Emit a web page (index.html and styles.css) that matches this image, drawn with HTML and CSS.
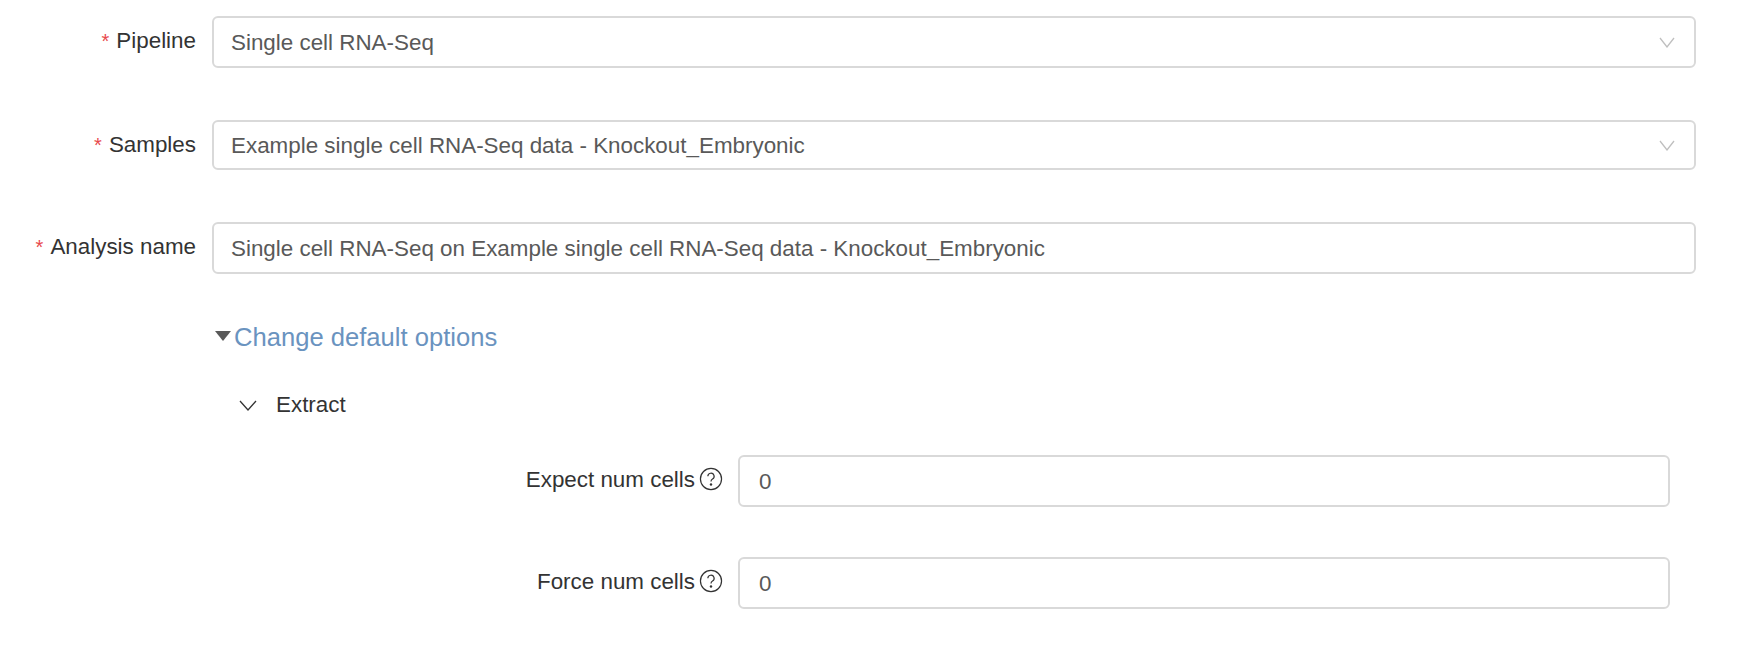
FILE: index.html
```html
<!DOCTYPE html>
<html lang="en">
<head>
<meta charset="utf-8">
<title>Analysis form</title>
<link rel="stylesheet" href="styles.css">
</head>
<body>
<form class="form">
  <div class="row row-pipeline">
    <label class="label"><span class="req">*</span>Pipeline</label>
    <div class="control select"><span class="value">Single cell RNA-Seq</span>
      <svg class="arrow" viewBox="0 0 16 11"><path d="M1 1l7 9 7-9"/></svg></div>
  </div>
  <div class="row row-samples">
    <label class="label"><span class="req">*</span>Samples</label>
    <div class="control select short"><span class="value">Example single cell RNA-Seq data - Knockout_Embryonic</span>
      <svg class="arrow" viewBox="0 0 16 11"><path d="M1 1l7 9 7-9"/></svg></div>
  </div>
  <div class="row row-name">
    <label class="label"><span class="req">*</span>Analysis name</label>
    <div class="control"><span class="value">Single cell RNA-Seq on Example single cell RNA-Seq data - Knockout_Embryonic</span></div>
  </div>
  <div class="toggle"><span class="caret"></span><a class="toggle-link">Change default options</a></div>
  <div class="section">
    <svg class="section-arrow" viewBox="0 0 18 11"><path d="M1 1l8 9 8-9"/></svg>
    <span>Extract</span>
  </div>
  <div class="sub-row sub-first">
    <label class="sub-label">Expect num cells<svg class="help" viewBox="0 0 20 20"><circle cx="10" cy="10" r="8.8"/><path d="M7.4 7.8a2.6 2.6 0 1 1 3.9 2.2c-.9.5-1.3 1-1.3 2.1"/><circle class="dot" cx="10" cy="14.6" r="1"/></svg></label>
    <div class="control num"><span class="value">0</span></div>
  </div>
  <div class="sub-row">
    <label class="sub-label">Force num cells<svg class="help" viewBox="0 0 20 20"><circle cx="10" cy="10" r="8.8"/><path d="M7.4 7.8a2.6 2.6 0 1 1 3.9 2.2c-.9.5-1.3 1-1.3 2.1"/><circle class="dot" cx="10" cy="14.6" r="1"/></svg></label>
    <div class="control num"><span class="value">0</span></div>
  </div>
</form>
</body>
</html>
```

FILE: styles.css
```css
* { box-sizing: border-box; }
html, body { margin: 0; height: 100%; background: #fff; overflow: hidden; }
body { font-family: "Liberation Sans", Arial, sans-serif; font-size: 22.4px; color: #333; }
.form { width: 1750px; padding-top: 16px; }
.row { display: flex; align-items: flex-start; gap: 16px; padding-right: 54px; }
.row-samples { margin-top: 52px; }
.row-name { margin-top: 52px; }
.label { width: 196px; flex: none; text-align: right; line-height: 26px; margin-top: 12px; white-space: nowrap; }
.req { color: #e8484c; margin-right: 7px; font-size: 20px; }
.control {
  flex: 1; height: 52px; border: 2px solid #d9d9d9; border-radius: 6px;
  padding: 0 17px; display: flex; align-items: center; justify-content: space-between;
  color: #595959; background: #fff;
}
.value { padding-top: 2px; }
.short { height: 50px; }
.arrow { width: 16px; height: 11px; margin-right: 2px; }
.arrow path { fill: none; stroke: #bfbfbf; stroke-width: 1.3; }
.toggle { display: flex; align-items: center; margin: 48px 0 0 215px; height: 30px; }
.caret { width: 0; height: 0; border-left: 8px solid transparent; border-right: 8px solid transparent; border-top: 10px solid #595959; margin-right: 3px; margin-bottom: 3px; }
.toggle-link { color: #6a93bf; font-size: 25.6px; }
.section { display: flex; align-items: center; margin: 41px 0 0 239px; height: 24px; color: #333; }
.section-arrow { width: 18px; height: 11px; margin-right: 19px; }
.section-arrow path { fill: none; stroke: #333; stroke-width: 1.3; }
.sub-row { display: flex; align-items: flex-start; padding-left: 400px; padding-right: 80px; margin-top: 50px; }
.sub-first { margin-top: 38px; }
.sub-label { width: 323px; flex: none; display: flex; align-items: center; justify-content: flex-end; margin-right: 15px; margin-top: 12px; height: 26px; white-space: nowrap; }
.help { width: 24px; height: 24px; margin-left: 4px; margin-top: -2px; flex: none; }
.help circle, .help path { fill: none; stroke: #333; stroke-width: 1; }
.help .dot { fill: #333; stroke: none; }
.num { flex: 1; padding-left: 19px; }
```
